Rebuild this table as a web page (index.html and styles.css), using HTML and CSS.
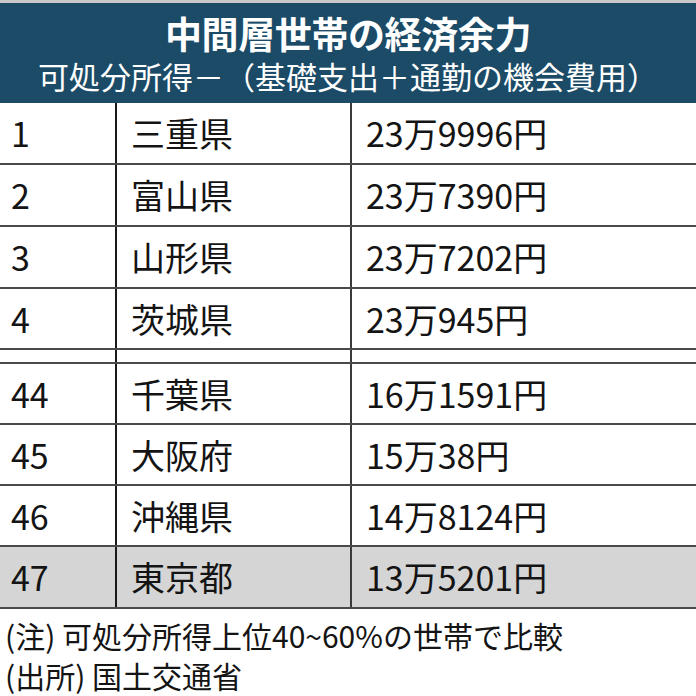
FILE: index.html
```html
<!DOCTYPE html>
<html lang="ja">
<head>
<meta charset="utf-8">
<link rel="stylesheet" href="styles.css">
</head>
<body>
<div class="page">
  <div class="header">
    <div class="title">中間層世帯の経済余力</div>
    <div class="subtitle">可処分所得－（基礎支出＋通勤の機会費用）</div>
  </div>
  <div class="table">
    <div class="row r62"><div class="cell rank">1</div><div class="cell pref">三重県</div><div class="cell val">23万9996円</div></div>
    <div class="row r62"><div class="cell rank">2</div><div class="cell pref">富山県</div><div class="cell val">23万7390円</div></div>
    <div class="row r62"><div class="cell rank">3</div><div class="cell pref">山形県</div><div class="cell val">23万7202円</div></div>
    <div class="row r61"><div class="cell rank">4</div><div class="cell pref">茨城県</div><div class="cell val">23万945円</div></div>
    <div class="row gap"><div class="cell rank"></div><div class="cell pref"></div><div class="cell val"></div></div>
    <div class="row r61"><div class="cell rank">44</div><div class="cell pref">千葉県</div><div class="cell val">16万1591円</div></div>
    <div class="row r61"><div class="cell rank">45</div><div class="cell pref">大阪府</div><div class="cell val">15万38円</div></div>
    <div class="row r61"><div class="cell rank">46</div><div class="cell pref">沖縄県</div><div class="cell val">14万8124円</div></div>
    <div class="row r62 last"><div class="cell rank">47</div><div class="cell pref">東京都</div><div class="cell val">13万5201円</div></div>
  </div>
  <div class="notes">
    <div class="note">(注) 可処分所得上位40~60%の世帯で比較</div>
    <div class="note">(出所) 国土交通省</div>
  </div>
</div>
</body>
</html>
```
FILE: styles.css
```css
html, body {
  margin: 0;
  padding: 0;
  background: #ffffff;
}
.page {
  width: 696px;
  height: 696px;
  overflow: hidden;
  font-family: "Noto Sans CJK JP", "Noto Sans", sans-serif;
  color: #141414;
}
.header {
  border-top: 3px solid #c9c9c9;
  background: #1c4b67;
  color: #ffffff;
  text-align: center;
  padding: 8px 0 6px;
}
.title {
  font-size: 37px;
  font-weight: 700;
  line-height: 44px;
  letter-spacing: -0.4px;
}
.subtitle {
  font-size: 31px;
  line-height: 42px;
}
.table {
  display: flex;
  flex-direction: column;
}
.row {
  display: grid;
  grid-template-columns: 115px 235px 1fr;
  box-sizing: border-box;
  border-bottom: 2px solid #4a4a4a;
}
.r62 { height: 62px; }
.r61 { height: 61px; }
.gap { height: 14px; }
.last { background: #d5d5d5; }
.cell {
  display: flex;
  align-items: center;
  font-size: 34px;
  line-height: 40px;
}
.rank { padding-left: 11px; }
.pref {
  border-left: 2px solid #1a1a1a;
  padding-left: 14px;
}
.val {
  border-left: 2px solid #3a3a3a;
  padding-left: 14px;
}
.notes {
  padding: 6px 0 0 5px;
}
.note {
  font-size: 30px;
  line-height: 40px;
  white-space: nowrap;
}
```
